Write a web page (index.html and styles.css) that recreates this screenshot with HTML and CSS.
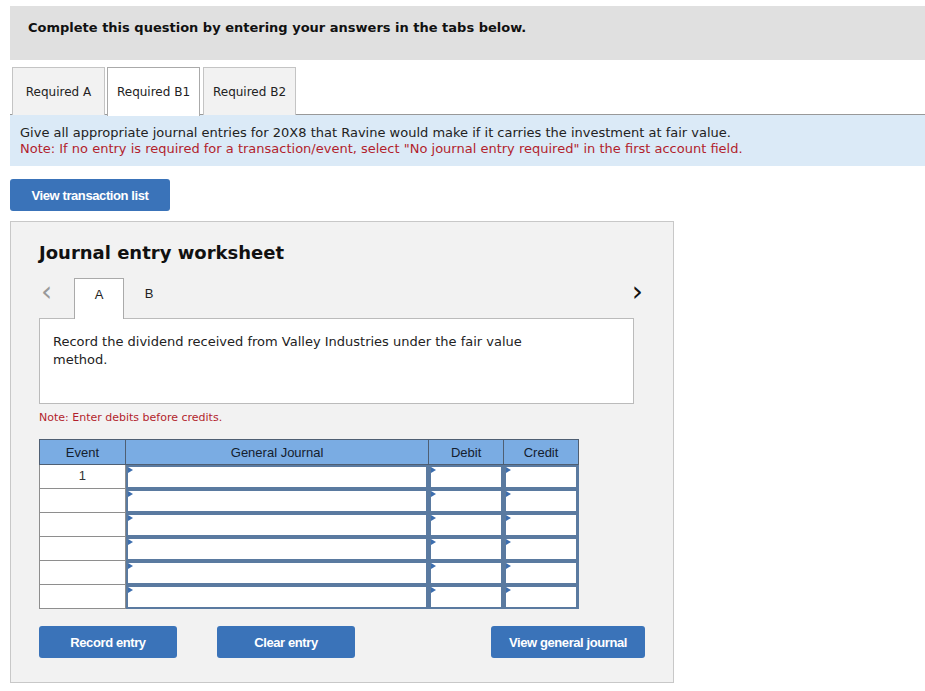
FILE: index.html
```html
<!DOCTYPE html>
<html lang="en">
<head>
    <meta charset="UTF-8">
    <title>Journal entry worksheet</title>
    <link rel="stylesheet" href="styles.css">
</head>
<body>
    <div class="banner">Complete this question by entering your answers in the tabs below.</div>

    <div class="tabs">
        <div class="tab">Required A</div>
        <div class="tab active">Required B1</div>
        <div class="tab">Required B2</div>
    </div>

    <div class="info">
        <div>Give all appropriate journal entries for 20X8 that Ravine would make if it carries the investment at fair value.</div>
        <div class="note">Note: If no entry is required for a transaction/event, select "No journal entry required" in the first account field.</div>
    </div>

    <button class="btn btn-list">View transaction list</button>

    <div class="panel">
        <h2>Journal entry worksheet</h2>

        <div class="nav">
            <span class="chev chev-prev">&lsaquo;</span>
            <div class="sub-tab active">A</div>
            <div class="sub-tab">B</div>
            <span class="chev chev-next">&rsaquo;</span>
        </div>

        <div class="prompt">Record the dividend received from Valley Industries under the fair value method.</div>

        <div class="debit-note">Note: Enter debits before credits.</div>

        <table class="journal">
            <thead>
                <tr>
                    <th class="col-event">Event</th>
                    <th class="col-account">General Journal</th>
                    <th class="col-amount">Debit</th>
                    <th class="col-amount">Credit</th>
                </tr>
            </thead>
            <tbody>
                <tr>
                    <td class="event">1</td>
                    <td class="field"><div class="cell"></div></td>
                    <td class="field"><div class="cell"></div></td>
                    <td class="field"><div class="cell"></div></td>
                </tr>
                <tr>
                    <td class="event"></td>
                    <td class="field"><div class="cell"></div></td>
                    <td class="field"><div class="cell"></div></td>
                    <td class="field"><div class="cell"></div></td>
                </tr>
                <tr>
                    <td class="event"></td>
                    <td class="field"><div class="cell"></div></td>
                    <td class="field"><div class="cell"></div></td>
                    <td class="field"><div class="cell"></div></td>
                </tr>
                <tr>
                    <td class="event"></td>
                    <td class="field"><div class="cell"></div></td>
                    <td class="field"><div class="cell"></div></td>
                    <td class="field"><div class="cell"></div></td>
                </tr>
                <tr>
                    <td class="event"></td>
                    <td class="field"><div class="cell"></div></td>
                    <td class="field"><div class="cell"></div></td>
                    <td class="field"><div class="cell"></div></td>
                </tr>
                <tr>
                    <td class="event"></td>
                    <td class="field"><div class="cell"></div></td>
                    <td class="field"><div class="cell"></div></td>
                    <td class="field"><div class="cell"></div></td>
                </tr>
            </tbody>
        </table>

        <div class="actions">
            <button class="btn btn-record">Record entry</button>
            <button class="btn btn-clear">Clear entry</button>
            <button class="btn btn-view">View general journal</button>
        </div>
    </div>
</body>
</html>
```

FILE: styles.css
```css
* {
    box-sizing: border-box;
}

body {
    margin: 0;
    padding: 6px 0 0 10px;
    font-family: 'DejaVu Sans', Verdana, sans-serif;
    font-size: 13px;
    color: #222;
    background: #fff;
}

.banner {
    height: 54px;
    background: #e0e0e0;
    padding: 14px 0 0 18px;
    line-height: 16px;
    font-weight: bold;
    font-size: 13px;
    color: #111;
}

.tabs {
    display: flex;
    gap: 2px;
    margin-top: 7px;
    padding-left: 2px;
    border-bottom: 1px solid #999;
    height: 48px;
}

.tab {
    width: 93px;
    height: 48px;
    display: flex;
    align-items: center;
    justify-content: center;
    font-size: 12px;
    color: #222;
    background: #f2f2f2;
    border: 1px solid #c4c4c4;
    border-bottom: none;
}

.tab.active {
    background: #fff;
    border-color: #aaa;
    height: 49px;
    margin-bottom: -1px;
}

.tab:last-child {
    margin-left: 1px;
}

.info {
    background: #dbeaf7;
    padding: 10px 10px 9px 10px;
    line-height: 16px;
    font-size: 13px;
    color: #222;
}

.info .note {
    color: #b21f2d;
}

.btn {
    border: none;
    border-radius: 3px;
    background: #3a73b9;
    color: #fff;
    font-family: 'Liberation Sans Narrow', 'Liberation Sans', Arial, sans-serif;
    font-stretch: condensed;
    font-weight: bold;
    font-size: 13px;
    letter-spacing: -0.4px;
    height: 32px;
    cursor: pointer;
}

.btn-list {
    display: block;
    width: 160px;
    margin-top: 13px;
}

.panel {
    margin-top: 10px;
    width: 664px;
    height: 462px;
    background: #f2f2f2;
    border: 1px solid #c8c8c8;
    padding: 0 28px;
}

h2 {
    margin: 19px 0 0 0;
    font-size: 18px;
    line-height: 24px;
    font-weight: bold;
    color: #111;
}

.nav {
    display: flex;
    align-items: flex-start;
    margin-top: 13px;
    height: 41px;
    position: relative;
    z-index: 1;
}

.chev {
    font-family: 'DejaVu Sans', sans-serif;
    font-size: 28px;
    line-height: 28px;
    height: 30px;
}

.chev-prev {
    color: #999;
    width: 35px;
    padding-left: 2px;
}

.chev-next {
    color: #111;
    margin-left: auto;
    padding-right: 2px;
}

.sub-tab {
    width: 50px;
    height: 41px;
    display: flex;
    align-items: center;
    justify-content: center;
    font-family: 'Liberation Sans', Arial, sans-serif;
    font-size: 13px;
    color: #222;
    padding-bottom: 10px;
}

.sub-tab.active {
    background: #fff;
    border: 1px solid #aaa;
    border-bottom: none;
}

.prompt {
    width: 595px;
    height: 86px;
    margin-top: -1px;
    background: #fff;
    border: 1px solid #bbb;
    padding: 14px 100px 0 13px;
    line-height: 18px;
    color: #222;
}

.debit-note {
    margin-top: 7px;
    font-size: 11px;
    color: #b21f2d;
}

.journal {
    margin-top: 15px;
    border-collapse: collapse;
    width: 540px;
    font-family: 'Liberation Sans', Arial, sans-serif;
    font-size: 13px;
}

.journal th {
    height: 25px;
    background: #7aace3;
    color: #14202e;
    font-weight: normal;
    border: 1px solid #4f5f73;
    padding: 0;
}

.col-event {
    width: 86px;
}

.col-account {
    width: 304px;
}

.col-amount {
    width: 75px;
}

.journal td {
    height: 24px;
    padding: 0;
}

.journal td.event {
    background: #fff;
    border: 1px solid #8e8e8e;
    text-align: center;
    vertical-align: top;
    padding-top: 3px;
    color: #333;
}

.journal td.field {
    background: #5a7aa0;
    padding: 2px 2px 1px 2px;
    border: 1px solid #5a7aa0;
}

.cell {
    position: relative;
    height: 20px;
    background: #fff;
}

.cell::before {
    content: "";
    position: absolute;
    left: 0;
    top: 0;
    border-left: 5px solid #3d6eae;
    border-top: 3px solid transparent;
    border-bottom: 3px solid transparent;
}

.actions {
    display: flex;
    margin-top: 17px;
}

.btn-record {
    width: 138px;
}

.btn-clear {
    width: 138px;
    margin-left: 40px;
}

.btn-view {
    width: 154px;
    margin-left: auto;
}
```
